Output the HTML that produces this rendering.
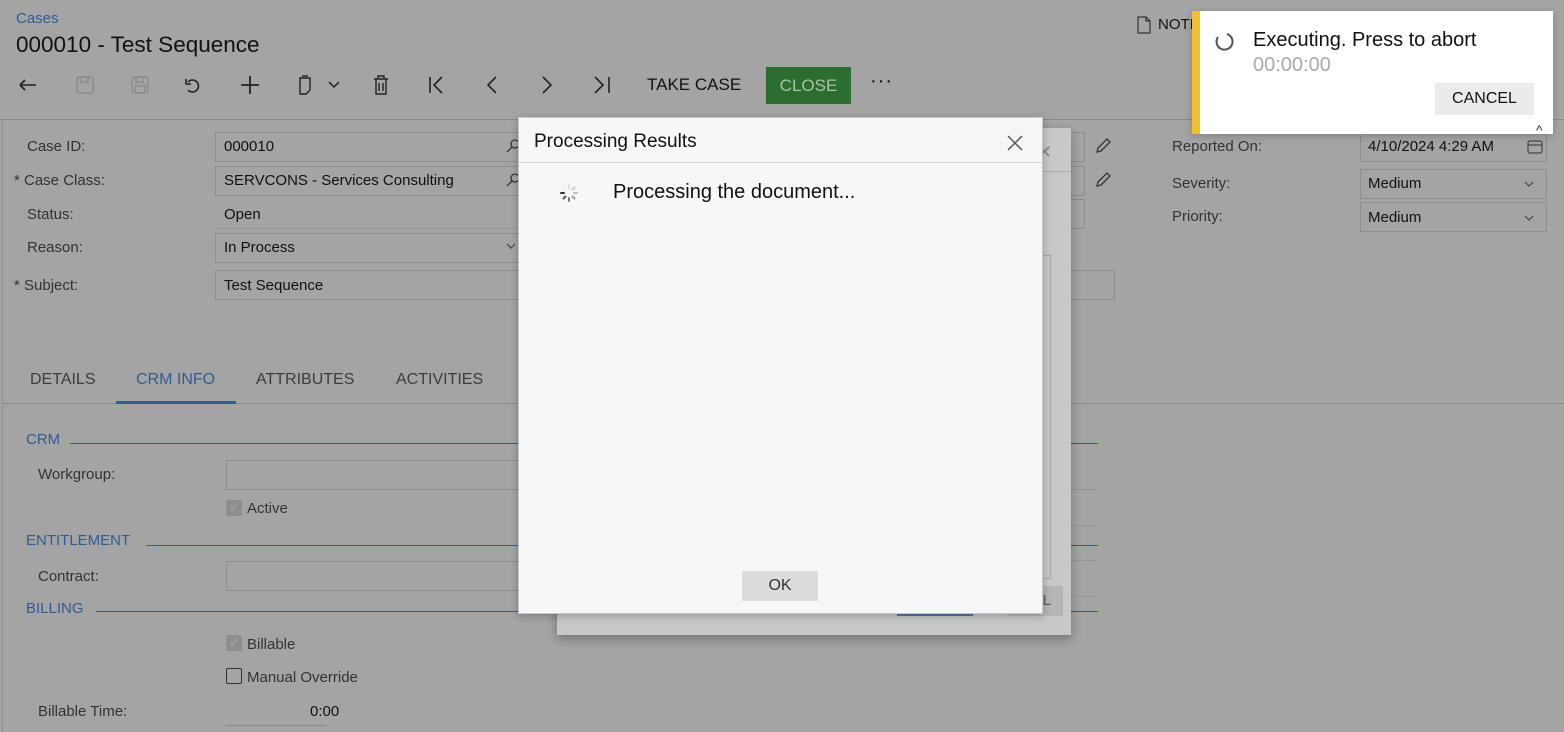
<!DOCTYPE html>
<html><head><meta charset="utf-8"><style>
*{box-sizing:border-box;margin:0;padding:0}
body{width:1564px;height:732px;overflow:hidden;background:#a4a4a4;font-family:"Liberation Sans",Arial,sans-serif;position:relative;color:#111}
.a{position:absolute;white-space:nowrap}
.lbl{font-size:15px;color:#333}
.val{font-size:15px;color:#111}
.inp{position:absolute;border:1px solid #8e8e8e;height:30px}
.blue{color:#2f5d94}
.sec{position:absolute;height:1px;background:#2f5d94}
svg{position:absolute;overflow:visible}
</style></head><body>
<div class="a blue" style="left:16px;top:10px;font-size:15px">Cases</div>
<div class="a" style="left:16px;top:32px;font-size:22.5px;color:#111">000010 - Test Sequence</div>

<svg style="left:18px;top:76px" width="20" height="20" fill="none" stroke="#222" stroke-width="1.6"><path d="M2 10h16M2 10l5-5M2 10l5 5" transform="translate(0,-1)"/></svg>
<svg style="left:76px;top:76px" width="18" height="18" fill="none" stroke="#888" stroke-width="1.3"><rect x="1" y="1" width="16" height="16" rx="2"/><rect x="5" y="1" width="7" height="5"/></svg>
<svg style="left:131px;top:76px" width="18" height="18" fill="none" stroke="#888" stroke-width="1.3"><rect x="1" y="1" width="16" height="16" rx="2"/><rect x="5" y="1" width="7" height="5"/><rect x="4" y="10" width="10" height="7"/></svg>
<svg style="left:184px;top:76px" width="20" height="18" fill="none" stroke="#222" stroke-width="1.6"><path d="M4 14A6 6 0 1 0 4 6M2 3v5h5"/></svg>
<svg style="left:240px;top:75px" width="20" height="20" stroke="#222" stroke-width="1.8"><path d="M10 1v18M1 10h18"/></svg>
<svg style="left:297px;top:75px" width="16" height="20" fill="none" stroke="#222" stroke-width="1.4"><path d="M3 3h10v12l-4 4H3z"/><path d="M5 1h6"/></svg>
<svg style="left:328px;top:81px" width="12" height="8" fill="none" stroke="#222" stroke-width="1.5"><path d="M1 1l5 5 5-5"/></svg>
<svg style="left:373px;top:75px" width="16" height="20" fill="none" stroke="#222" stroke-width="1.4"><path d="M1 4h14M5 4V1h6v3M3 4v15h10V4M6 8v8M10 8v8"/></svg>
<svg style="left:428px;top:76px" width="18" height="18" fill="none" stroke="#222" stroke-width="1.6"><path d="M2 1v16M14 1l-8 8 8 8"/></svg>
<svg style="left:486px;top:76px" width="12" height="18" fill="none" stroke="#222" stroke-width="1.6"><path d="M10 1L2 9l8 8"/></svg>
<svg style="left:541px;top:76px" width="12" height="18" fill="none" stroke="#222" stroke-width="1.6"><path d="M2 1l8 8-8 8"/></svg>
<svg style="left:593px;top:76px" width="18" height="18" fill="none" stroke="#222" stroke-width="1.6"><path d="M16 1v16M2 1l8 8-8 8"/></svg>
<div class="a" style="left:647px;top:75px;font-size:17px;color:#111">TAKE CASE</div>
<div class="a" style="left:766px;top:67px;width:85px;height:37px;background:#2c6e2f;color:#a9c4a9;font-size:17px;text-align:center;line-height:37px">CLOSE</div>
<div class="a" style="left:870px;top:70px;font-size:20px;color:#111;letter-spacing:1px">···</div>

<svg style="left:1137px;top:16px" width="14" height="18" fill="none" stroke="#333" stroke-width="1.2"><path d="M1 1h8l4 4v12H1z M9 1v4h4"/></svg>
<div class="a" style="left:1158px;top:16px;font-size:15px">NOTI</div>

<div class="a" style="left:0;top:119px;width:1564px;height:1px;background:#8a8a8a"></div>
<div class="a" style="left:2px;top:119px;width:1px;height:613px;background:#909090"></div>

<div class="a lbl" style="left:27px;top:138px">Case ID:</div>
<div class="a lbl" style="left:14px;top:172px">* Case Class:</div>
<div class="a lbl" style="left:27px;top:206px">Status:</div>
<div class="a lbl" style="left:27px;top:239px">Reason:</div>
<div class="a lbl" style="left:14px;top:277px">* Subject:</div>
<div class="inp" style="left:215px;top:132px;width:320px"></div>
<div class="inp" style="left:215px;top:166px;width:320px"></div>
<div class="a" style="left:215px;top:228px;width:310px;border-top:1px dotted #888"></div>
<div class="inp" style="left:215px;top:233px;width:320px"></div>
<div class="inp" style="left:215px;top:270px;width:900px"></div>
<div class="a val" style="left:224px;top:138px">000010</div>
<div class="a val" style="left:224px;top:172px">SERVCONS - Services Consulting</div>
<div class="a val" style="left:224px;top:206px">Open</div>
<div class="a val" style="left:224px;top:239px">In Process</div>
<div class="a val" style="left:224px;top:277px">Test Sequence</div>
<svg style="left:506px;top:139px" width="14" height="14" fill="none" stroke="#333" stroke-width="1.3"><circle cx="9" cy="5" r="4"/><path d="M6 8L1 13"/></svg>
<svg style="left:506px;top:173px" width="14" height="14" fill="none" stroke="#333" stroke-width="1.3"><circle cx="9" cy="5" r="4"/><path d="M6 8L1 13"/></svg>
<svg style="left:506px;top:243px" width="10" height="6" fill="none" stroke="#444" stroke-width="1.2"><path d="M1 1l4 4 4-4"/></svg>

<div class="inp" style="left:1040px;top:132px;width:45px"></div>
<div class="inp" style="left:1040px;top:166px;width:45px"></div>
<div class="inp" style="left:1040px;top:199px;width:45px"></div>
<svg style="left:1095px;top:138px" width="16" height="16" fill="none" stroke="#333" stroke-width="1.3"><path d="M2 14l1-4 9-9 3 3-9 9z"/></svg>
<svg style="left:1095px;top:172px" width="16" height="16" fill="none" stroke="#333" stroke-width="1.3"><path d="M2 14l1-4 9-9 3 3-9 9z"/></svg>
<div class="a lbl" style="left:1172px;top:138px">Reported On:</div>
<div class="a lbl" style="left:1172px;top:175px">Severity:</div>
<div class="a lbl" style="left:1172px;top:208px">Priority:</div>
<div class="inp" style="left:1360px;top:132px;width:187px"></div>
<div class="inp" style="left:1360px;top:169px;width:187px"></div>
<div class="inp" style="left:1360px;top:202px;width:187px"></div>
<div class="a val" style="left:1368px;top:138px">4/10/2024 4:29 AM</div>
<div class="a val" style="left:1368px;top:175px">Medium</div>
<div class="a val" style="left:1368px;top:209px">Medium</div>
<svg style="left:1527px;top:138px" width="16" height="16" fill="none" stroke="#444" stroke-width="1.2"><rect x="1" y="3" width="14" height="12" rx="2"/><path d="M1 7h14"/></svg>
<svg style="left:1524px;top:181px" width="10" height="6" fill="none" stroke="#444" stroke-width="1.2"><path d="M1 1l4 4 4-4"/></svg>
<svg style="left:1524px;top:215px" width="10" height="6" fill="none" stroke="#444" stroke-width="1.2"><path d="M1 1l4 4 4-4"/></svg>

<div class="a" style="left:30px;top:371px;font-size:16px;color:#3c3c3c">DETAILS</div>
<div class="a blue" style="left:136px;top:371px;font-size:16px">CRM INFO</div>
<div class="a" style="left:256px;top:371px;font-size:16px;color:#3c3c3c">ATTRIBUTES</div>
<div class="a" style="left:396px;top:371px;font-size:16px;color:#3c3c3c">ACTIVITIES</div>
<div class="a" style="left:3px;top:403px;width:1561px;height:1px;background:#8a8a8a"></div>
<div class="a" style="left:116px;top:401px;width:120px;height:3px;background:#2f5d94"></div>

<div class="a blue" style="left:26px;top:431px;font-size:15px">CRM</div>
<div class="sec" style="left:70px;top:443px;width:1028px"></div>
<div class="a lbl" style="left:38px;top:466px">Workgroup:</div>
<div class="inp" style="left:226px;top:460px;width:320px"></div>
<div class="a" style="left:226px;top:500px;width:16px;height:16px;background:#8e8e8e;border-radius:2px;color:#aaa;font-size:12px;text-align:center;line-height:16px">✓</div>
<div class="a val" style="left:247px;top:500px;color:#333">Active</div>
<div class="a blue" style="left:26px;top:532px;font-size:15px">ENTITLEMENT</div>
<div class="sec" style="left:146px;top:545px;width:952px"></div>
<div class="a lbl" style="left:38px;top:568px">Contract:</div>
<div class="inp" style="left:226px;top:561px;width:320px"></div>
<div class="a blue" style="left:26px;top:600px;font-size:15px">BILLING</div>
<div class="sec" style="left:96px;top:611px;width:1002px"></div>
<div class="a" style="left:226px;top:635px;width:16px;height:16px;background:#8e8e8e;border-radius:2px;color:#aaa;font-size:12px;text-align:center;line-height:16px">✓</div>
<div class="a val" style="left:247px;top:636px;color:#333">Billable</div>
<div class="a" style="left:226px;top:668px;width:16px;height:16px;border:1.5px solid #333;border-radius:2px"></div>
<div class="a val" style="left:247px;top:669px;color:#333">Manual Override</div>
<div class="a lbl" style="left:38px;top:703px">Billable Time:</div>
<div class="a val" style="left:310px;top:703px">0:00</div>
<div class="a" style="left:226px;top:725px;width:100px;height:1px;background:#888"></div>
<div class="a" style="left:1070px;top:489px;width:28px;border-top:1px dotted #888"></div>
<div class="a" style="left:1070px;top:525px;width:28px;border-top:1px dotted #888"></div>
<div class="a" style="left:1070px;top:560px;width:28px;border-top:1px dotted #888"></div>
<div class="a" style="left:1070px;top:596px;width:28px;border-top:1px dotted #888"></div>

<div class="a" style="left:557px;top:128px;width:514px;height:507px;background:#c7c8c8;box-shadow:0 4px 10px rgba(0,0,0,.3)">
  <div class="a" style="left:0;top:43px;width:514px;height:1px;background:#aaa"></div>
  <div class="a" style="left:480px;top:14px;font-size:18px;color:#888">✕</div>
  <div class="a" style="left:460px;top:127px;width:34px;height:324px;border:1px solid #aaa;border-left:none"></div>
  <div class="a" style="left:340px;top:458px;width:76px;height:30px;border-bottom:2px solid #4a78b0"></div>
  <div class="a" style="left:450px;top:458px;width:56px;height:30px;background:#b5b6b7;font-size:15px;color:#555;line-height:30px;text-align:right;padding-right:12px">EL</div>
</div>

<div class="a" style="left:518px;top:117px;width:525px;height:497px;background:#f6f7f9;border:1px solid #c8c8c8;box-shadow:0 2px 8px rgba(0,0,0,.25)">
  <div class="a" style="left:15px;top:13px;font-size:19px;color:#111">Processing Results</div>
  <svg style="left:488px;top:17px" width="16" height="16" stroke="#555" stroke-width="1.5"><path d="M1 1l14 14M15 1L1 15"/></svg>
  <div class="a" style="left:0;top:44px;width:523px;height:1px;background:#d4d4d4"></div>
  <svg style="left:40px;top:65px" width="20" height="20" stroke-width="2" stroke-linecap="round">
    <path d="M10 2v3" stroke="#ddd"/><path d="M15.5 4.5l-2 2" stroke="#ccc"/><path d="M18 10h-3" stroke="#bbb"/><path d="M15.5 15.5l-2-2" stroke="#999"/><path d="M10 18v-3" stroke="#777"/><path d="M4.5 15.5l2-2" stroke="#555"/><path d="M2 10h3" stroke="#333"/><path d="M4.5 4.5l2 2" stroke="#eee"/>
  </svg>
  <div class="a" style="left:94px;top:63px;font-size:20px;color:#111">Processing the document...</div>
  <div class="a" style="left:223px;top:453px;width:76px;height:30px;background:#dcdcdd;font-size:16px;color:#333;text-align:center;line-height:30px">OK</div>
</div>

<div class="a" style="left:1192px;top:11px;width:361px;height:123px;background:#fff;border-left:8px solid #f0c030;box-shadow:0 2px 8px rgba(0,0,0,.2)">
  <svg style="left:14px;top:20px" width="22" height="22" fill="none" stroke="#555" stroke-width="2"><path d="M4 6A8 8 0 1 0 13 3"/></svg>
  <div class="a" style="left:53px;top:18px;font-size:20px;color:#111">Executing. Press to abort</div>
  <div class="a" style="left:53px;top:43px;font-size:20px;color:#aaa">00:00:00</div>
  <div class="a" style="left:235px;top:72px;width:99px;height:32px;background:#ebebee;font-size:16px;color:#111;text-align:center;line-height:32px">CANCEL</div>
</div>
<div class="a" style="left:1536px;top:122px;font-size:14px;color:#333">^</div>
</body></html>
